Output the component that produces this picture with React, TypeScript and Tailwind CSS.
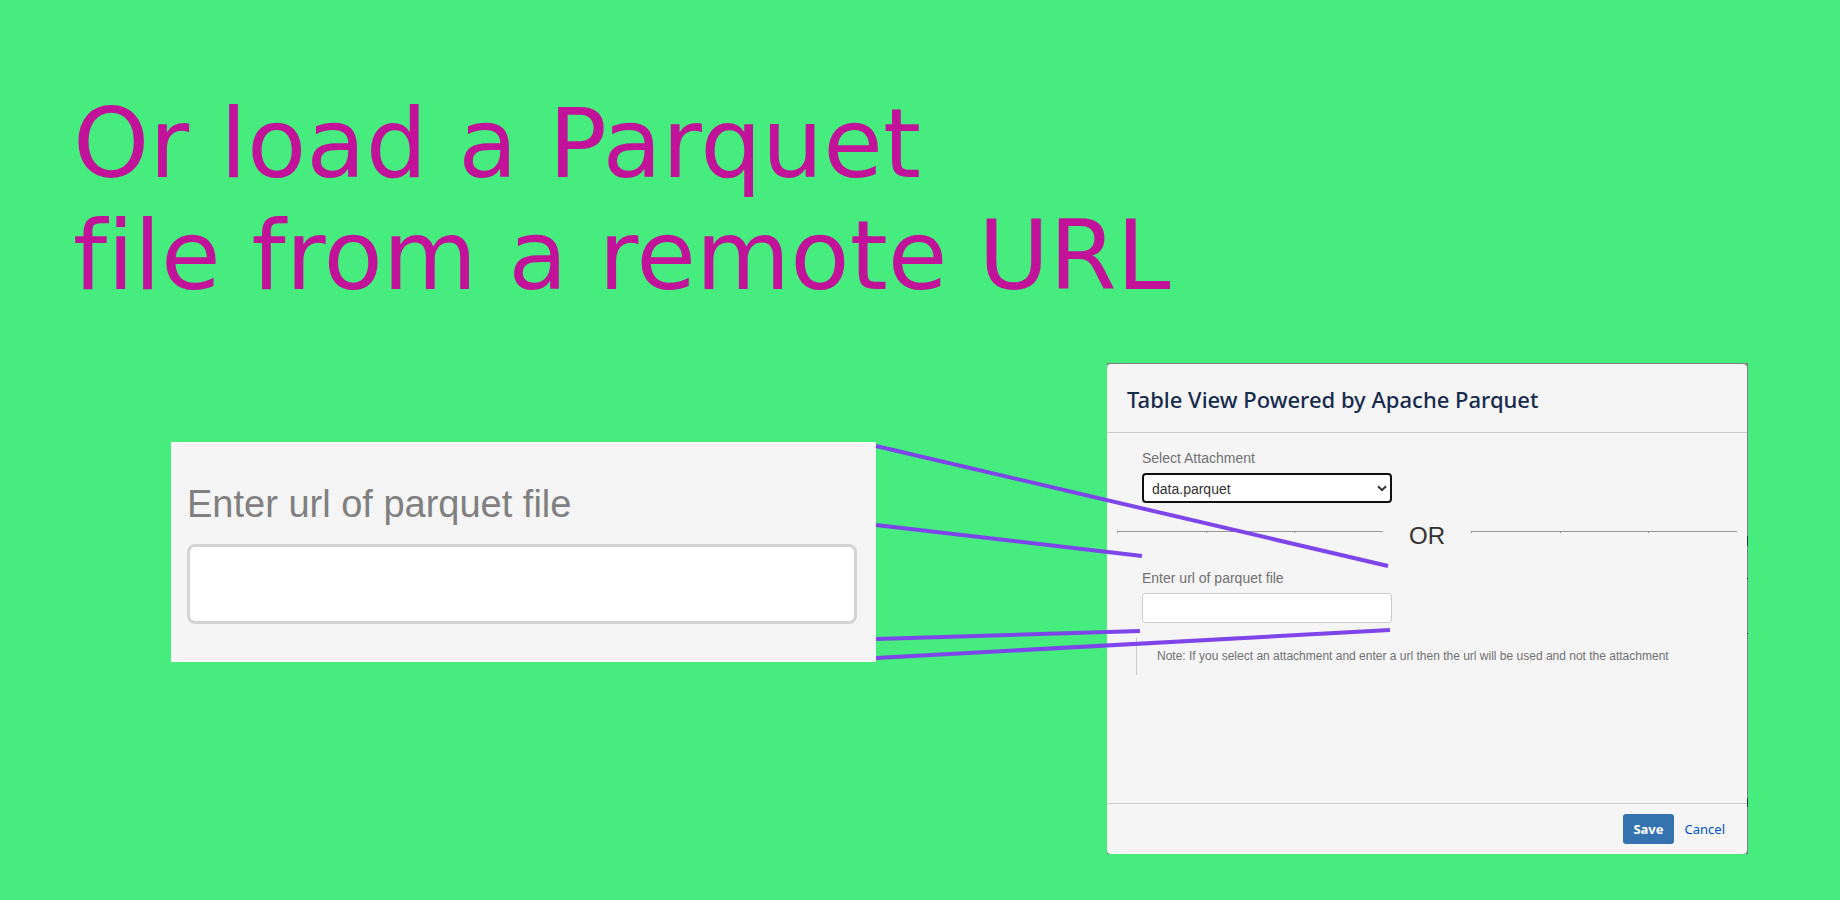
import { useState } from "react";

const connectors = [
  { x1: 705, y1: 83, x2: 1217, y2: 203 },
  { x1: 705, y1: 162, x2: 971, y2: 193 },
  { x1: 705, y1: 276, x2: 969, y2: 268 },
  { x1: 705, y1: 295, x2: 1219, y2: 267 },
];

function Connectors() {
  return (
    <svg
      className="pointer-events-none absolute inset-0 h-full w-full"
      viewBox="0 0 1577 491"
      preserveAspectRatio="none"
      aria-hidden="true"
    >
      {connectors.map((line) => (
        <line
          key={line.y1}
          {...line}
          stroke="#7d45ea"
          strokeWidth="4"
          vectorEffect="non-scaling-stroke"
        />
      ))}
      <path d="M1576 173h1v10h-1zM1576 215h1v1h-1zM1576 270h1v1h-1zM1576 435h1v9h-1z" fill="#2b3348" />
    </svg>
  );
}

function Rule() {
  return (
    <div className="mt-[9px] flex flex-1" aria-hidden="true">
      <div className="h-[2px] flex-1 border-t border-l border-[#979797]" />
      <div className="h-[2px] flex-1 border-t border-l border-[#979797]" />
      <div className="h-[2px] flex-1 border-t border-l border-[#979797]" />
    </div>
  );
}

function UrlCloseUp() {
  const [url, setUrl] = useState("");
  return (
    <section className="mt-[79px] h-fit bg-[#f5f5f5] pt-[41px] pr-[19px] pb-[38px] pl-4 font-['Liberation_Sans',Arial,sans-serif]">
      <label htmlFor="url-large" className="block text-[38px] leading-[42px] text-[#808080]">
        Enter url of parquet file
      </label>
      <input
        id="url-large"
        type="text"
        value={url}
        onChange={(e) => setUrl(e.target.value)}
        className="mt-[19px] block h-20 w-full rounded-lg border-[3px] border-[#d3d3d3] bg-white px-5 text-[38px] text-[#333333] outline-none"
      />
    </section>
  );
}

function ParquetDialog() {
  const [url, setUrl] = useState("");
  return (
    <section className="bg-[#808080] pt-px pr-px">
      <form
        className="rounded-[4px] bg-[#f5f5f5] font-['Liberation_Sans',Arial,sans-serif] text-sm text-[#707070]"
        onSubmit={(e) => e.preventDefault()}
      >
        <header className="border-b border-[#cccccc] px-5 pt-[21px] pb-[19px]">
          <h2 className="font-['Noto_Sans','Segoe_UI',sans-serif] text-[22px] leading-[28px] font-medium text-[#172b4d]">
            Table View Powered by Apache Parquet
          </h2>
        </header>

        <div className="pt-[15px] pb-32">
          <div className="px-[35px]">
            <label htmlFor="attachment" className="block leading-5">
              Select Attachment
            </label>
            <div className="relative mt-[5px] w-[250px]">
              <select
                id="attachment"
                className="block h-[30px] w-full appearance-none rounded-[4px] border-2 border-[#101010] bg-white px-2 pt-[2px] text-sm text-[#333333] outline-none"
              >
                <option>data.parquet</option>
              </select>
              <svg
                className="pointer-events-none absolute top-3 right-[5px] h-[7px] w-[10px]"
                viewBox="0 0 10 7"
                fill="none"
                aria-hidden="true"
              >
                <path d="M1 1.2 5 5.2 9 1.2" stroke="#333333" strokeWidth="2" />
              </svg>
            </div>
          </div>

          <div className="mt-[19px] flex gap-[26px] px-[10px]">
            <Rule />
            <span className="text-2xl leading-7 text-[#333333]">OR</span>
            <Rule />
          </div>

          <div className="mt-[18px] px-[35px]">
            <label htmlFor="url" className="block leading-5">
              Enter url of parquet file
            </label>
            <input
              id="url"
              type="text"
              value={url}
              onChange={(e) => setUrl(e.target.value)}
              className="mt-[5px] block h-[30px] w-[250px] rounded-[3px] border border-[#cccccc] bg-white px-2 text-[#333333] outline-none"
            />
          </div>

          <p className="mt-[15px] ml-[29px] border-l border-[#cccccc] py-[10px] pl-5 text-xs leading-[17px]">
            Note: If you select an attachment and enter a url then the url will be used and not the attachment
          </p>
        </div>

        <footer className="flex items-center justify-end gap-[11px] border-t border-[#cccccc] py-[10px] pr-[22px] font-['Noto_Sans','Segoe_UI',sans-serif] text-[13px]">
          <button type="submit" className="h-[30px] rounded-[3px] bg-[#3572b0] px-[10px] font-bold text-white">
            Save
          </button>
          <a href="#cancel" className="text-[#0052cc]">
            Cancel
          </a>
        </footer>
      </form>
    </section>
  );
}

export default function App() {
  return (
    <main className="min-h-screen bg-[#46ec7d] pt-[88px] pb-[46px]">
      <h1 className="pl-[73px] font-[Verdana,'DejaVu_Sans',sans-serif] text-[97px] leading-[112px] text-[#c11299] [font-variant-ligatures:none]">
        Or load a Parquet
        <br />
        file from a remote URL
      </h1>
      <div className="mt-[51px] pr-[92px] pl-[171px]">
        <div className="relative grid grid-cols-[705fr_641fr] gap-[231px]">
          <UrlCloseUp />
          <ParquetDialog />
          <Connectors />
        </div>
      </div>
    </main>
  );
}
